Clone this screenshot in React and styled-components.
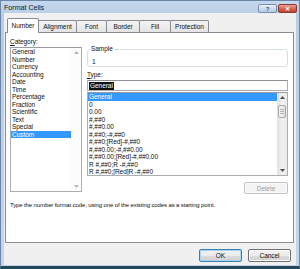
import React from 'react';
import styled, { createGlobalStyle } from 'styled-components';

const GlobalStyle = createGlobalStyle`
  html, body {
    margin: 0;
    padding: 0;
    background: #fff;
  }
  body {
    font-family: "Liberation Sans", Arial, sans-serif;
  }
`;

const categories = [
  'General', 'Number', 'Currency', 'Accounting', 'Date', 'Time',
  'Percentage', 'Fraction', 'Scientific', 'Text', 'Special', 'Custom',
];

const formats = [
  'General', '0', '0.00', '#,##0', '#,##0.00', '#,##0;-#,##0',
  '#,##0;[Red]-#,##0', '#,##0.00;-#,##0.00', '#,##0.00;[Red]-#,##0.00',
  'R #,##0;R -#,##0', 'R #,##0;[Red]R -#,##0',
];

const tabs = [
  { label: 'Number', w: 32 },
  { label: 'Alignment', w: 39 },
  { label: 'Font', w: 31 },
  { label: 'Border', w: 34 },
  { label: 'Fill', w: 32 },
  { label: 'Protection', w: 39 },
];

const Window = styled.div`
  width: 300px;
  height: 269px;
  box-sizing: border-box;
  display: flex;
  flex-direction: column;
  border: 1px solid #6a87a8;
  border-bottom: 3px solid #24485a;
  padding: 0 3px 1px 3px;
  background: linear-gradient(#c6d8ee, #b8cde6 14px, #c3d5ea);
  font-family: "Liberation Sans", Arial, sans-serif;
  font-size: 6.5px;
  letter-spacing: -0.05px;
  color: #111;
`;

const TitleBar = styled.div`
  height: 12px;
  display: flex;
  align-items: center;
  justify-content: space-between;
  margin-right: -1px;
`;

const Title = styled.span`
  font-size: 7.2px;
  color: #1b1b1b;
`;

const CaptionButtons = styled.div`
  display: flex;
  gap: 1px;
  align-self: flex-end;
`;

const CaptionButton = styled.div`
  width: 19px;
  height: 9px;
  box-sizing: border-box;
  border-radius: 2px;
  display: flex;
  align-items: center;
  justify-content: center;
  font-size: 6px;
  font-weight: bold;
  line-height: 1;
  border: 1px solid ${(p) => (p.$close ? '#8a3a30' : '#7790b2')};
  background: ${(p) =>
    p.$close
      ? 'linear-gradient(#e9a598, #d56a5a 50%, #c23d2d)'
      : 'linear-gradient(#eaf1f9, #cddbed 50%, #b6cae3)'};
  color: ${(p) => (p.$close ? '#fff' : '#3a4f6e')};
`;

const Client = styled.div`
  flex: 1;
  background: #f0f0f0;
  padding: 5px 2px 0 1px;
  display: flex;
  flex-direction: column;
`;

const TabRow = styled.div`
  display: flex;
  align-items: flex-start;
  height: 15px;
  padding-left: 2px;
  margin-bottom: -1px;
  position: relative;
  z-index: 1;
`;

const Tab = styled.div`
  box-sizing: border-box;
  width: ${(p) => p.$w}px;
  height: ${(p) => (p.$active ? 15 : 12)}px;
  margin-top: ${(p) => (p.$active ? 0 : 2)}px;
  margin-right: -1px;
  border: 1px solid #898c95;
  border-bottom: none;
  border-radius: 2px 2px 0 0;
  background: ${(p) => (p.$active ? '#fff' : 'linear-gradient(#f3f3f3, #e4e4e4)')};
  display: flex;
  align-items: center;
  justify-content: center;
  padding-bottom: ${(p) => (p.$active ? 1 : 0)}px;
  position: relative;
  z-index: ${(p) => (p.$active ? 2 : 1)};
`;

const Panel = styled.div`
  height: 211px;
  box-sizing: border-box;
  background: #fff;
  border: 1px solid #898c95;
  padding: 5px 5px 0 4px;
  display: flex;
  flex-direction: column;
`;

const Body = styled.div`
  display: flex;
  gap: 5px;
`;

const LeftCol = styled.div`
  width: 72px;
  display: flex;
  flex-direction: column;
`;

const RightCol = styled.div`
  flex: 1;
  display: flex;
  flex-direction: column;
`;

const Label = styled.div`
  line-height: 8px;
  height: 8px;
  margin-top: ${(p) => p.$top || 0}px;
  margin-bottom: 1px;
`;

const ListBox = styled.div`
  height: ${(p) => p.$h}px;
  box-sizing: border-box;
  border: 1px solid #abadb3;
  border-top-color: #9a9ca3;
  background: #fff;
  display: flex;
  overflow: hidden;
`;

const Items = styled.div`
  flex: 1;
  overflow: hidden;
`;

const Row = styled.div`
  height: 7.5px;
  line-height: 7.5px;
  padding-left: 1px;
  white-space: nowrap;
  background: ${(p) => (p.$selected ? '#3399ff' : 'transparent')};
  color: ${(p) => (p.$selected ? '#fff' : '#111')};
`;

const ScrollBar = styled.div`
  width: 10px;
  display: flex;
  flex-direction: column;
  background: ${(p) => (p.$disabled ? '#fcfcfc' : 'linear-gradient(90deg, #e2e2e2, #f1f1f1 60%, #e9e9e9)')};
`;

const ArrowCell = styled.div`
  height: 9px;
  display: flex;
  align-items: center;
  justify-content: center;
`;

const Thumb = styled.div`
  height: 13px;
  margin: 3px 1px 0;
  box-sizing: border-box;
  border: 1px solid #a8a8a8;
  border-radius: 2px;
  background: linear-gradient(90deg, #f6f6f6, #e0e0e0);
  display: flex;
  flex-direction: column;
  justify-content: center;
  align-items: center;
  gap: 1px;
`;

const Grip = styled.span`
  width: 4px;
  height: 1px;
  background: #b4b4b4;
`;

const Spacer = styled.div`
  flex: 1;
`;

const SampleBox = styled.fieldset`
  margin: 7px 0 0;
  padding: 5px 2px 0;
  border: 1px solid #d5dfe5;
  border-radius: 3px;
  min-width: 0;
`;

const Legend = styled.legend`
  padding: 0 1px;
  line-height: 8px;
  font-size: 6.5px;
`;

const SampleValue = styled.div`
  line-height: 8px;
  height: 8px;
  padding-left: 2px;
`;

const TextBox = styled.div`
  height: 11px;
  box-sizing: border-box;
  border: 1px solid #abadb3;
  border-top-color: #8e9199;
  display: flex;
  align-items: center;
  padding-left: 1px;
  margin-bottom: 1px;
`;

const Selected = styled.span`
  background: #111;
  color: #fff;
  line-height: 8px;
  padding: 0 1px;
`;

const Button = styled.div`
  width: ${(p) => p.$w || 43}px;
  height: ${(p) => p.$h || 13}px;
  box-sizing: border-box;
  border-radius: 2px;
  display: flex;
  align-items: center;
  justify-content: center;
  border: 1px solid ${(p) => (p.$disabled ? '#bfc3c6' : p.$default ? '#3c7fb1' : '#707070')};
  background: ${(p) =>
    p.$disabled
      ? '#f4f4f4'
      : 'linear-gradient(#f2f2f2, #ebebeb 50%, #dddddd 51%, #cfcfcf)'};
  box-shadow: ${(p) => (p.$default ? 'inset 0 0 0 1px #a6d4f2' : 'inset 0 0 0 1px #fcfcfc')};
  color: ${(p) => (p.$disabled ? '#a0a0a0' : '#111')};
`;

const DeleteWrap = styled.div`
  margin-top: 6px;
  display: flex;
  justify-content: flex-end;
`;

const Description = styled.div`
  margin-top: 7px;
  line-height: 8px;
  font-size: 6px;
  letter-spacing: -0.12px;
  white-space: nowrap;
`;

const Footer = styled.div`
  display: flex;
  justify-content: flex-end;
  gap: 6px;
  padding: 6px 3px 0 0;
`;

function Arrow({ down, color = '#4d4d4d' }) {
  return (
    <svg width="5" height="3" viewBox="0 0 5 3" style={down ? { transform: 'rotate(180deg)' } : undefined}>
      <path d="M0 3 L2.5 0 L5 3 Z" fill={color} />
    </svg>
  );
}

export default function App() {
  return (
    <>
      <GlobalStyle />
      <Window>
        <TitleBar>
          <Title>Format Cells</Title>
          <CaptionButtons>
            <CaptionButton>?</CaptionButton>
            <CaptionButton $close>✕</CaptionButton>
          </CaptionButtons>
        </TitleBar>
        <Client>
          <TabRow>
            {tabs.map((t, i) => (
              <Tab key={t.label} $w={t.w} $active={i === 0}>
                {t.label}
              </Tab>
            ))}
          </TabRow>
          <Panel>
            <Body>
              <LeftCol>
                <Label>
                  <u>C</u>ategory:
                </Label>
                <ListBox $h={145}>
                  <Items>
                    {categories.map((c) => (
                      <Row key={c} $selected={c === 'Custom'}>
                        {c}
                      </Row>
                    ))}
                  </Items>
                  <ScrollBar $disabled>
                    <ArrowCell>
                      <Arrow color="#b5b5b5" />
                    </ArrowCell>
                    <Spacer />
                    <ArrowCell>
                      <Arrow down color="#b5b5b5" />
                    </ArrowCell>
                  </ScrollBar>
                </ListBox>
              </LeftCol>
              <RightCol>
                <SampleBox>
                  <Legend>Sample</Legend>
                  <SampleValue>1</SampleValue>
                </SampleBox>
                <Label $top={4}>
                  <u>T</u>ype:
                </Label>
                <TextBox>
                  <Selected>General</Selected>
                </TextBox>
                <ListBox $h={84}>
                  <Items>
                    {formats.map((f, i) => (
                      <Row key={f} $selected={i === 0}>
                        {f}
                      </Row>
                    ))}
                  </Items>
                  <ScrollBar>
                    <ArrowCell>
                      <Arrow />
                    </ArrowCell>
                    <Thumb>
                      <Grip />
                      <Grip />
                      <Grip />
                    </Thumb>
                    <Spacer />
                    <ArrowCell>
                      <Arrow down />
                    </ArrowCell>
                  </ScrollBar>
                </ListBox>
                <DeleteWrap>
                  <Button $w={44} $h={12} $disabled>
                    Delete
                  </Button>
                </DeleteWrap>
              </RightCol>
            </Body>
            <Description>
              Type the number format code, using one of the existing codes as a starting point.
            </Description>
          </Panel>
          <Footer>
            <Button $default>OK</Button>
            <Button>Cancel</Button>
          </Footer>
        </Client>
      </Window>
    </>
  );
}
